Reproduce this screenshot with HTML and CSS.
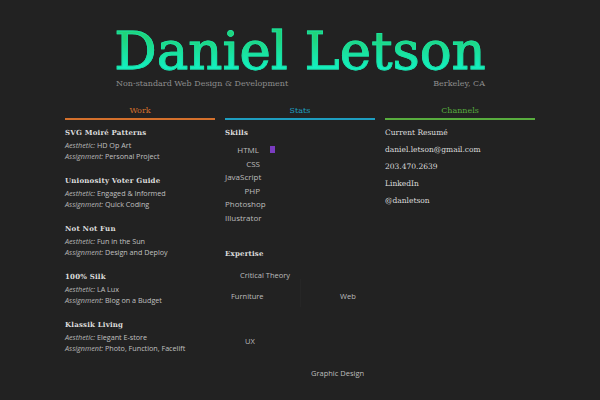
FILE: index.html
```html
<!DOCTYPE html>
<html lang="en">
<head>
<meta charset="utf-8">
<title>Daniel Letson</title>
<link rel="stylesheet" href="styles.css">
</head>
<body>
<div class="page">
  <header class="masthead">
    <h1 class="name">Daniel Letson</h1>
    <div class="tagline">
      <span>Non-standard Web Design &amp; Development</span>
      <span>Berkeley, CA</span>
    </div>
  </header>

  <main class="columns">
    <section class="col work">
      <h2 class="col-head">Work</h2>
      <article class="project">
        <h3>SVG Moiré Patterns</h3>
        <p><em>Aesthetic:</em> HD Op Art</p>
        <p><em>Assignment:</em> Personal Project</p>
      </article>
      <article class="project">
        <h3>Unionosity Voter Guide</h3>
        <p><em>Aesthetic:</em> Engaged &amp; Informed</p>
        <p><em>Assignment:</em> Quick Coding</p>
      </article>
      <article class="project">
        <h3>Not Not Fun</h3>
        <p><em>Aesthetic:</em> Fun in the Sun</p>
        <p><em>Assignment:</em> Design and Deploy</p>
      </article>
      <article class="project">
        <h3>100% Silk</h3>
        <p><em>Aesthetic:</em> LA Lux</p>
        <p><em>Assignment:</em> Blog on a Budget</p>
      </article>
      <article class="project">
        <h3>Klassik Living</h3>
        <p><em>Aesthetic:</em> Elegant E-store</p>
        <p><em>Assignment:</em> Photo, Function, Facelift</p>
      </article>
    </section>

    <section class="col stats">
      <h2 class="col-head">Stats</h2>
      <h3>Skills</h3>
      <ul class="skills">
        <li><span class="skill s-html">HTML</span><span class="bar"></span></li>
        <li><span class="skill s-css">CSS</span></li>
        <li><span class="skill s-js">JavaScript</span></li>
        <li><span class="skill s-php">PHP</span></li>
        <li><span class="skill s-ps">Photoshop</span></li>
        <li><span class="skill s-ai">Illustrator</span></li>
      </ul>
      <h3 class="expertise-head">Expertise</h3>
      <div class="cloud">
        <span class="divider"></span>
        <span class="word w1">Critical Theory</span>
        <span class="word w2">Furniture</span>
        <span class="word w3">Web</span>
        <span class="word w4">UX</span>
        <span class="word w5">Graphic Design</span>
      </div>
    </section>

    <section class="col channels">
      <h2 class="col-head">Channels</h2>
      <ul class="links">
        <li>Current Resumé</li>
        <li>daniel.letson@gmail.com</li>
        <li>203.470.2639</li>
        <li>LinkedIn</li>
        <li>@danletson</li>
      </ul>
    </section>
  </main>
</div>
</body>
</html>
```

FILE: styles.css
```css
html, body {
  margin: 0;
  padding: 0;
  background: #222222;
}

body {
  font-family: "Open Sans", "DejaVu Sans", sans-serif;
  color: #cfcfcf;
}

.page {
  width: 470px;
  margin: 0 auto;
}

.masthead {
  padding-top: 25px;
}

.name {
  margin: 0;
  font-family: "DejaVu Serif", serif;
  font-weight: normal;
  font-size: 53px;
  line-height: 52px;
  height: 53px;
  letter-spacing: 0;
  text-align: center;
  background: linear-gradient(180deg, #20d47a 25%, #12f2c8 85%);
  -webkit-background-clip: text;
  background-clip: text;
  color: transparent;
  -webkit-text-stroke: 0.9px rgba(26, 226, 164, 0.85);
}

.tagline {
  display: flex;
  justify-content: space-between;
  padding: 0 50px 0 51px;
  font-family: "DejaVu Serif", serif;
  font-size: 8px;
  line-height: 10px;
  color: #8e8e8e;
  margin-top: 1px;
}

.columns {
  display: grid;
  grid-template-columns: 150px 150px 150px;
  column-gap: 10px;
  margin-top: 16px;
}

.col-head {
  margin: 0 0 7px;
  font-family: "DejaVu Serif", serif;
  font-weight: normal;
  font-size: 8px;
  line-height: 12px;
  text-align: center;
  padding-bottom: 1px;
  border-bottom: 2px solid;
}

.work .col-head { color: #d4702c; border-color: #d4702c; }
.stats .col-head { color: #1e9ec0; border-color: #1e9ec0; }
.channels .col-head { color: #58ad3e; border-color: #58ad3e; }

h3 {
  margin: 0;
  font-family: "DejaVu Serif", serif;
  font-weight: bold;
  font-size: 7px;
  line-height: 12px;
  color: #dddddd;
  letter-spacing: 0.2px;
}

.project {
  margin-bottom: 13px;
}

.project h3 {
  margin-bottom: 1px;
}

.project p {
  margin: 0;
  font-size: 7.2px;
  line-height: 11px;
  color: #c0c0c0;
}

.project em {
  color: #b8b8b8;
}

.skills {
  list-style: none;
  margin: 4px 0 0;
  padding: 0;
  font-size: 8px;
  line-height: 13.6px;
  color: #bdbdbd;
}

.skills li {
  display: flex;
  align-items: center;
  height: 13.6px;
}

.skill {
  display: block;
  width: 35px;
  text-align: right;
}

.s-html { width: 34px; }
.s-js { width: 34px; }
.s-ps { width: 37px; }
.s-ai { width: 36px; }

.bar {
  display: block;
  width: 5px;
  height: 7px;
  margin-left: 11px;
  background: #7a3cc0;
}

.expertise-head {
  margin-top: 23px;
}

.cloud {
  position: relative;
  height: 130px;
  font-size: 7.5px;
  line-height: 10px;
  color: #bdbdbd;
}

.word {
  position: absolute;
  white-space: nowrap;
}

.w1 { left: 15px; top: 10px; }
.w2 { left: 6px; top: 31px; }
.w3 { left: 115px; top: 31px; }
.w4 { left: 20px; top: 76px; }
.w5 { left: 86px; top: 108px; }

.divider {
  position: absolute;
  left: 75px;
  top: 19px;
  width: 1px;
  height: 28px;
  background: #262626;
}

.links {
  list-style: none;
  margin: -3px 0 0;
  padding: 0;
  font-family: "DejaVu Serif", serif;
  font-size: 7.5px;
  line-height: 17px;
  color: #dddddd;
}
```
